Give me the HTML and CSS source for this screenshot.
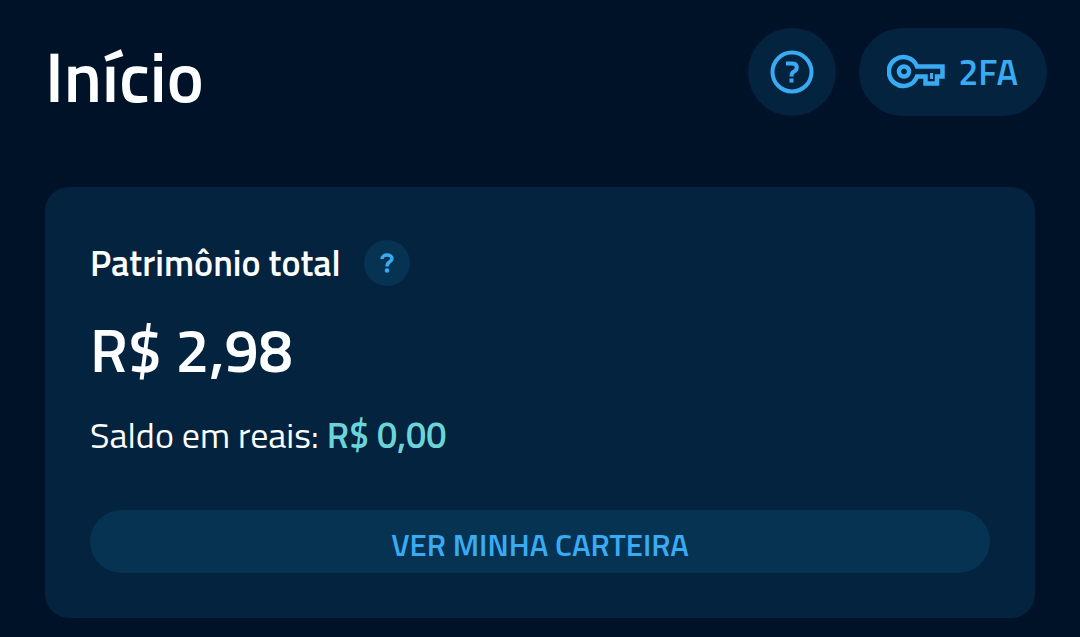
FILE: index.html
```html
<!DOCTYPE html>
<html lang="pt-BR">
<head>
    <meta charset="UTF-8">
    <meta name="viewport" content="width=device-width, initial-scale=1.0">
    <title>Início</title>
    <link rel="stylesheet" href="styles.css">
</head>
<body>
    <header class="header">
        <h1>Início</h1>
        <div class="actions">
            <button class="round-btn" type="button" aria-label="Ajuda">
                <svg width="44" height="44" viewBox="0 0 44 44" fill="none" stroke="currentColor" stroke-width="4">
                    <circle cx="22" cy="22" r="19.5"/>
                    <path d="M16 13.500H22C28.500 13.500 27.500 20 24 21.500C22 22.500 21.500 23.500 21.500 26.500"/>
                    <path d="M19.500 28.500h4v4h-4z" fill="currentColor" stroke="none"/>
                </svg>
            </button>
            <button class="key-btn" type="button">
                <svg width="58" height="36" viewBox="0 0 58 36" fill="none" stroke="currentColor" stroke-width="4.500">
                    <path d="M30 12.500H55.500V22.500H50V29.500H38.500V22.500H30A14.500 14.500 0 1 1 30 12.500Z"/>
                    <path d="M44.500 19v6" stroke-width="3"/>
                    <circle cx="17" cy="17.5" r="5"/>
                </svg>
                <span>2FA</span>
            </button>
        </div>
    </header>
    <main class="card">
        <div class="card-title">
            <h2>Patrimônio total</h2>
            <button class="hint-btn" type="button" aria-label="Sobre o patrimônio total">
                <svg width="14" height="20" viewBox="0 0 14 20" fill="none" stroke="currentColor" stroke-width="3.500">
                    <path d="M2 6C2 .8 12 .8 12 5.500C12 9 7 8.500 7 13.500"/>
                    <circle cx="7" cy="17.500" r="2.300" fill="currentColor" stroke="none"/>
                </svg>
            </button>
        </div>
        <p class="total">R$ 2,98</p>
        <p class="balance">Saldo em reais: <strong>R$ 0,00</strong></p>
        <button class="wallet-btn" type="button">VER MINHA CARTEIRA</button>
    </main>
</body>
</html>
```
FILE: styles.css
```css
* {
    box-sizing: border-box;
}
body {
    margin: 0;
    padding: 28px 45px 19px;
    background: #001228;
    color: #fcfeff;
    font-family: 'Titillium Web', Roboto, sans-serif;
}
h1, h2, p {
    margin: 0;
    font-weight: 600;
}
button {
    border: none;
    padding: 0;
    font-family: inherit;
    font-weight: 600;
    color: #38abf2;
    cursor: pointer;
}
svg {
    display: block;
}
.header {
    display: flex;
    justify-content: space-between;
    align-items: center;
    margin-right: -12px;
    margin-bottom: 71px;
}
.header h1 {
    font-size: 70px;
    line-height: 78px;
    padding-top: 8px;
}
.actions {
    display: flex;
    gap: 23px;
}
.round-btn, .key-btn {
    display: flex;
    align-items: center;
    justify-content: center;
    height: 88px;
    background: #04233e;
    border-radius: 44px;
}
.round-btn {
    width: 88px;
}
.key-btn {
    gap: 13px;
    padding: 0 29px 0 28px;
    font-size: 36px;
    line-height: 44px;
}
.card {
    padding: 52px 45px 45px;
    background: #04233e;
    border-radius: 24px;
}
.card-title {
    display: flex;
    align-items: center;
    gap: 23px;
}
.card-title h2 {
    font-size: 36px;
    line-height: 48px;
}
.hint-btn {
    display: flex;
    align-items: center;
    justify-content: center;
    width: 46px;
    height: 46px;
    background: #073353;
    border-radius: 50%;
}
.total {
    margin-top: 27px;
    font-size: 61px;
    line-height: 72px;
}
.balance {
    margin-top: 25px;
    font-size: 36px;
    line-height: 48px;
    font-weight: 400;
}
.balance strong {
    color: #6bd4d8;
    font-weight: 600;
}
.wallet-btn {
    display: block;
    width: 100%;
    height: 63px;
    margin-top: 51px;
    padding-top: 6px;
    background: #073353;
    border-radius: 32px;
    font-size: 31px;
}
```
